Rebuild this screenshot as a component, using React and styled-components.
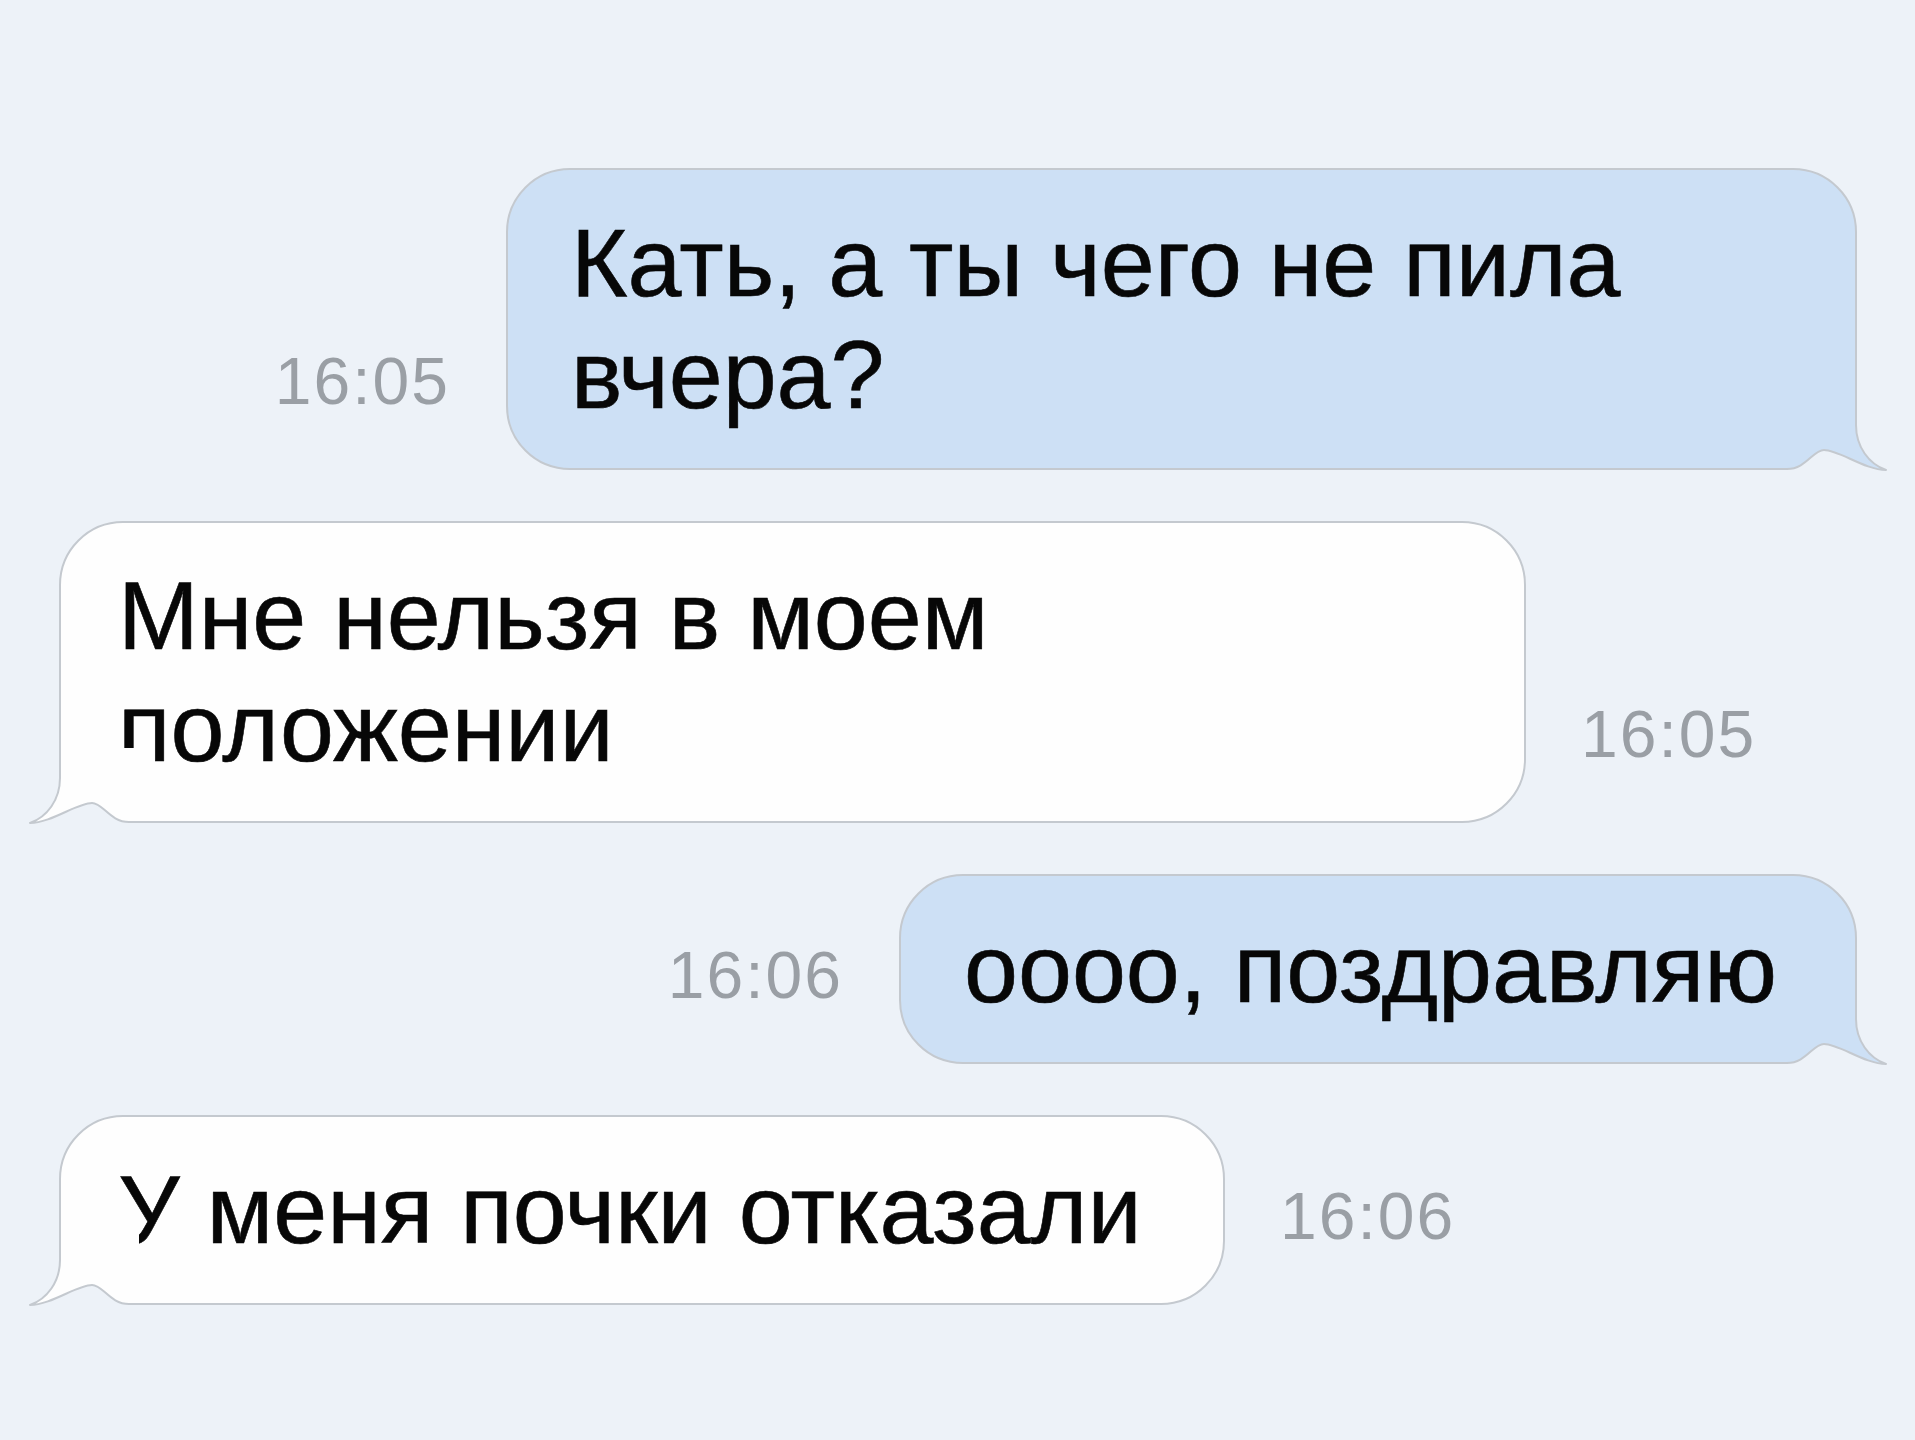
import React from 'react';
import styled, { createGlobalStyle } from 'styled-components';

const PAGE_BG = '#edf2f8';
const BORDER = '#c4c9cf';
const OUT_BG = '#cde0f5';
const IN_BG = '#fefefe';

const messages = [
  { id: 1, out: true, time: '16:05', width: 1351, lines: ['Кать, а ты чего не пила', 'вчера?'] },
  { id: 2, out: false, time: '16:05', width: 1467, lines: ['Мне нельзя в моем', 'положении'] },
  { id: 3, out: true, time: '16:06', width: 958, lines: ['оооо, поздравляю'] },
  { id: 4, out: false, time: '16:06', width: 1166, lines: ['У меня почки отказали'] },
];

function Tail({ out }) {
  const fill = out ? OUT_BG : IN_BG;
  const edge = 'M79 0 L79 30 C79 52 92 69 109 75 C88 75 62 55 47 55 C36 55 29 74 10 74 L0 74';
  return (
    <TailSvg $out={out} width="112" height="81" viewBox="0 0 112 81">
      <rect x="0" y="0" width="112" height="81" fill={PAGE_BG} />
      <path d={edge + ' L0 0 Z'} fill={fill} />
      <path d={edge} fill="none" stroke={BORDER} strokeWidth="2" strokeLinejoin="round" />
    </TailSvg>
  );
}

export default function App() {
  return (
    <>
      <GlobalStyle />
      <Feed>
        {messages.map((m) => (
          <Row key={m.id} $out={m.out}>
            {m.out && <Time>{m.time}</Time>}
            <Bubble $out={m.out} $w={m.width}>
              {m.lines.map((line, i) => (
                <Line key={i}>{line}</Line>
              ))}
              <Tail out={m.out} />
            </Bubble>
            {!m.out && <Time>{m.time}</Time>}
          </Row>
        ))}
      </Feed>
    </>
  );
}

const GlobalStyle = createGlobalStyle`
  html, body {
    margin: 0;
    padding: 0;
    background: ${PAGE_BG};
  }
  body {
    font-family: "Liberation Sans", Arial, sans-serif;
  }
`;

const Feed = styled.div`
  display: flex;
  flex-direction: column;
  gap: 51px;
  padding: 168px 58px 142px 59px;
  min-height: 1440px;
  box-sizing: border-box;
`;

const Row = styled.div`
  display: flex;
  align-items: flex-end;
  justify-content: ${(p) => (p.$out ? 'flex-end' : 'flex-start')};
  gap: ${(p) => (p.$out ? '56px' : '55px')};
`;

const Bubble = styled.div`
  position: relative;
  box-sizing: border-box;
  width: ${(p) => p.$w}px;
  padding: 37px 30px 37px ${(p) => (p.$out ? '63px' : '57px')};
  border: 2px solid ${BORDER};
  border-radius: 64px;
  background: ${(p) => (p.$out ? OUT_BG : IN_BG)};
  color: #070707;
  font-family: "Liberation Sans", Arial, sans-serif;
  font-size: 97px;
  line-height: 112px;
  -webkit-text-stroke: 0.6px #070707;
`;

const Line = styled.div`
  white-space: nowrap;
`;

const TailSvg = styled.svg`
  position: absolute;
  bottom: -8px;
  ${(p) => (p.$out ? 'right: -34px;' : 'left: -34px; transform: scaleX(-1);')}
  display: block;
`;

const Time = styled.div`
  font-family: "Liberation Sans", Arial, sans-serif;
  font-size: 66px;
  line-height: 66px;
  letter-spacing: 2px;
  color: #9a9fa5;
  margin-bottom: 56px;
  white-space: nowrap;
`;
